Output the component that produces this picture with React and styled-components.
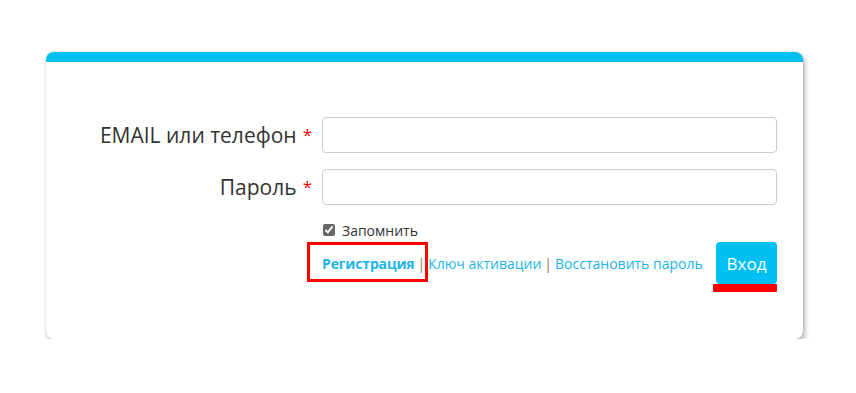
import React from "react";
import styled, { createGlobalStyle } from "styled-components";

const GlobalStyle = createGlobalStyle`
  body {
    margin: 0;
    background: #fff;
    font-family: "Open Sans", "Liberation Sans", sans-serif;
    color: #333;
  }
`;

const Page = styled.div`
  padding: 52px 53px 0 46px;
`;

const Card = styled.form`
  display: grid;
  grid-template-columns: 266px 1fr;
  column-gap: 10px;
  row-gap: 16px;
  padding: 55px 26px 55px 0;
  background: #fff;
  border-top: 10px solid #00bff2;
  border-radius: 8px;
  box-shadow: 2px 3px 5px rgba(0, 0, 0, 0.3), 0 0 2px rgba(0, 0, 0, 0.15);
`;

const Label = styled.label`
  display: flex;
  align-items: center;
  justify-content: flex-end;
  font-size: 21px;
  color: #333;
  white-space: nowrap;
`;

const Star = styled.span`
  color: #f00;
  font-size: 17px;
  margin-left: 6px;
  position: relative;
  top: -1px;
`;

const Input = styled.input`
  box-sizing: border-box;
  height: 36px;
  width: 100%;
  border: 1px solid #ccc;
  border-radius: 4px;
  background: #fff;
  font-family: inherit;
  font-size: 14px;
  padding: 0 10px;
`;

const Extras = styled.div`
  grid-column: 2;
  display: flex;
  flex-direction: column;
  gap: 2px;
  margin-top: -1px;
`;

const Remember = styled.label`
  display: flex;
  align-items: center;
  height: 20px;
  font-size: 14px;
  color: #333;
  input {
    width: 12px;
    height: 12px;
    margin: 0 7px 0 1px;
    accent-color: #666;
  }
`;

const Actions = styled.div`
  display: flex;
  align-items: center;
  justify-content: space-between;
`;

const Links = styled.div`
  font-size: 14px;
  color: #777;
  display: flex;
  align-items: center;
  gap: 3px;
`;

const Link = styled.a`
  color: #20b4e6;
  text-decoration: none;
  font-weight: ${(p) => (p.$bold ? 700 : 400)};
  letter-spacing: ${(p) => (p.$bold ? "-0.15px" : "0")};
  position: relative;
  ${(p) =>
    p.$marked &&
    `
    &::after {
      content: "";
      position: absolute;
      left: -15px;
      right: -14px;
      top: -12px;
      bottom: -9px;
      border: 3px solid #f00;
    }
  `}
`;

const Sep = styled.span`
  color: #8a7a5a;
`;

const Button = styled.button`
  position: relative;
  width: 61px;
  height: 42px;
  border: none;
  border-radius: 4px;
  background: #00bff2;
  color: #fff;
  font-family: inherit;
  font-size: 17px;
  padding: 0;
  &::after {
    content: "";
    position: absolute;
    left: -3px;
    right: 0;
    bottom: -8px;
    height: 8px;
    background: #f00;
    border-radius: 1px;
  }
`;

export default function App() {
  return (
    <>
      <GlobalStyle />
      <Page>
        <Card onSubmit={(e) => e.preventDefault()}>
          <Label>
            EMAIL или телефон<Star>*</Star>
          </Label>
          <Input type="text" />
          <Label>
            Пароль<Star>*</Star>
          </Label>
          <Input type="password" />
          <Extras>
            <Remember>
              <input type="checkbox" defaultChecked />
              Запомнить
            </Remember>
            <Actions>
              <Links>
                <Link href="#" $bold $marked>
                  Регистрация
                </Link>
                <Sep>|</Sep>
                <Link href="#">Ключ активации</Link>
                <Sep>|</Sep>
                <Link href="#">Восстановить пароль</Link>
              </Links>
              <Button type="submit">Вход</Button>
            </Actions>
          </Extras>
        </Card>
      </Page>
    </>
  );
}
